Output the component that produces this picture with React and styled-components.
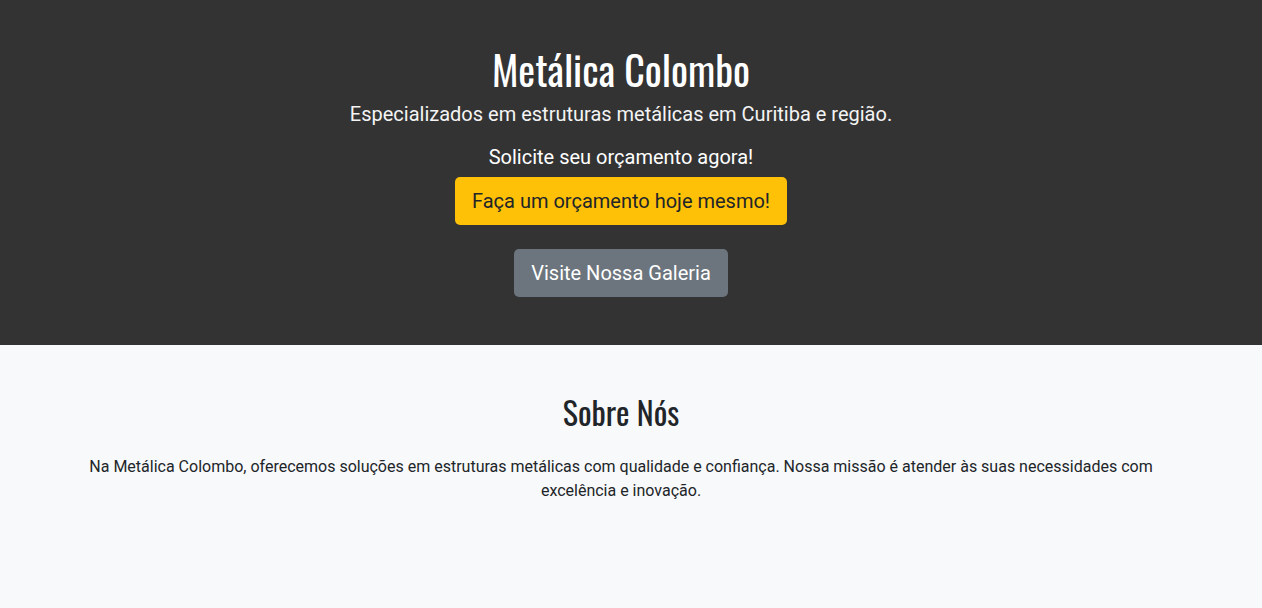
import React from "react";
import styled, { createGlobalStyle } from "styled-components";

const GlobalStyle = createGlobalStyle`
  *, *::before, *::after { box-sizing: border-box; }
  body {
    margin: 0;
    background: #f8f9fa;
    color: #212529;
    font-family: Roboto, "Liberation Sans", sans-serif;
    font-size: 16px;
    line-height: 24px;
  }
`;

const Section = styled.section`
  padding: 48px 36px 48px 16px;
  text-align: center;
`;

const Hero = styled(Section).attrs({ as: "header" })`
  background: #333333;
  color: #ffffff;
`;

const Container = styled.div`
  max-width: 1140px;
  margin: 0 auto;
  padding: 0 16px;
  display: flex;
  flex-direction: column;
  align-items: center;
`;

const Title = styled.h1`
  margin: 0 0 8px;
  font-family: Oswald, "Liberation Sans Narrow", sans-serif;
  font-size: 40px;
  font-weight: 400;
  line-height: 43px;
`;

const Lead = styled.p`
  margin: 0 0 16px;
  font-size: 20px;
  font-weight: 400;
  line-height: 30px;
  opacity: 0.95;
`;

const CallToAction = styled.h2`
  margin: 0 0 8px;
  font-size: 20px;
  font-weight: 400;
  line-height: 24px;
`;

const Actions = styled.div`
  display: flex;
  flex-direction: column;
  align-items: center;
  gap: 24px;
`;

const Button = styled.a`
  padding: 8px 16px;
  border: 1px solid transparent;
  border-radius: 5px;
  font-size: 20px;
  line-height: 30px;
  text-decoration: none;
  color: ${(p) => (p.$primary ? "#212529" : "#ffffff")};
  background: ${(p) => (p.$primary ? "#ffc107" : "#6c757d")};
`;

const Heading = styled.h2`
  margin: 0 0 24px;
  font-family: Oswald, "Liberation Sans Narrow", sans-serif;
  font-size: 32px;
  font-weight: 400;
  line-height: 38px;
`;

const Text = styled.p`
  margin: 0;
`;

export default function App() {
  return (
    <>
      <GlobalStyle />
      <Hero>
        <Container>
          <Title>Metálica Colombo</Title>
          <Lead>Especializados em estruturas metálicas em Curitiba e região.</Lead>
          <CallToAction>Solicite seu orçamento agora!</CallToAction>
          <Actions>
            <Button href="#orcamento" $primary>Faça um orçamento hoje mesmo!</Button>
            <Button href="#galeria">Visite Nossa Galeria</Button>
          </Actions>
        </Container>
      </Hero>
      <Section>
        <Container>
          <Heading>Sobre Nós</Heading>
          <Text>
            Na Metálica Colombo, oferecemos soluções em estruturas metálicas com qualidade e confiança. Nossa missão é atender às suas necessidades com excelência e inovação.
          </Text>
        </Container>
      </Section>
    </>
  );
}
